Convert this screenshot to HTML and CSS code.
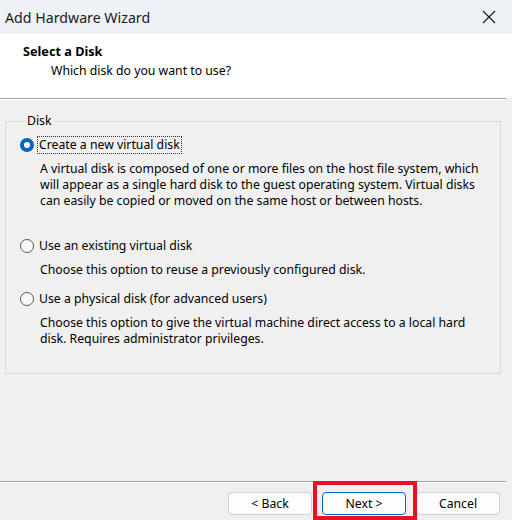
FILE: index.html
```html
<!DOCTYPE html>
<html>
<head>
<meta charset="utf-8">
<link rel="stylesheet" href="styles.css">
</head>
<body>
<div class="window">
  <div class="titlebar">
    <span class="title">Add Hardware Wizard</span>
    <svg class="close" width="14" height="14" viewBox="0 0 14 14"><path d="M1 1L13 13M13 1L1 13" stroke="#1a1a1a" stroke-width="1.2" fill="none"/></svg>
  </div>
  <div class="header">
    <div class="h-title">Select a Disk</div>
    <div class="h-sub">Which disk do you want to use?</div>
  </div>
  <div class="sep"></div>
  <div class="body">
    <fieldset class="group">
      <legend>Disk</legend>
      <div class="option">
        <span class="radio checked"></span>
        <span class="label focus">Create a new virtual disk</span>
      </div>
      <p class="desc d1">A virtual disk is composed of one or more files on the host file system, which will appear as a single hard disk to the guest operating system. Virtual disks can easily be copied or moved on the same host or between hosts.</p>
      <div class="option">
        <span class="radio"></span>
        <span class="label">Use an existing virtual disk</span>
      </div>
      <p class="desc d2">Choose this option to reuse a previously configured disk.</p>
      <div class="option">
        <span class="radio"></span>
        <span class="label">Use a physical disk (for advanced users)</span>
      </div>
      <p class="desc d3">Choose this option to give the virtual machine direct access to a local hard disk. Requires administrator privileges.</p>
    </fieldset>
  </div>
  <div class="sep bottom-sep"></div>
  <div class="buttons">
    <button class="btn">&lt; Back</button>
    <button class="btn primary">Next &gt;</button>
    <button class="btn">Cancel</button>
    <div class="highlight"></div>
  </div>
</div>
</body>
</html>
```
FILE: styles.css
```css
html, body {
  margin: 0;
  padding: 0;
}
body {
  width: 512px;
  height: 520px;
  overflow: hidden;
  background: #f0f0f0;
  font-family: "Noto Sans", "Open Sans", sans-serif;
  font-size: 12.25px;
  color: #000;
}
.window {
  display: flex;
  flex-direction: column;
  height: 520px;
  position: relative;
}
.titlebar {
  height: 34px;
  background: #eef2f6;
  display: flex;
  align-items: center;
  justify-content: space-between;
  padding: 0 16px 0 5px;
  box-sizing: border-box;
}
.title {
  font-size: 14.2px;
  color: #1a1a1a;
}
.close {
  display: block;
}
.header {
  background: #fff;
  height: 64px;
  box-sizing: border-box;
  padding: 7px 0 0 23px;
}
.h-title {
  font-weight: bold;
  font-size: 12.7px;
  line-height: 20px;
}
.h-sub {
  padding-left: 28px;
  line-height: 20px;
}
.sep {
  height: 1px;
  background: #a0a0a0;
  border-bottom: 1px solid #ffffff;
  margin-right: 6px;
}
.body {
  flex: 1;
  padding: 13px 11px 0 5px;
}
.group {
  margin: 0;
  border: 1px solid #d9d9d9;
  padding: 6px 8px 16px 14px;
  height: 261px;
  box-sizing: border-box;
}
.group legend {
  padding: 0 2px;
  margin-left: 5px;
  line-height: 16px;
}
.option {
  display: flex;
  align-items: center;
  height: 20px;
}
.radio {
  width: 14px;
  height: 14px;
  border-radius: 50%;
  border: 1px solid #5a5a5a;
  box-sizing: border-box;
  margin-right: 3px;
  background: #f7f7f7;
}
.radio.checked {
  border: 4px solid #0067c0;
  background: #fff;
}
.label {
  padding: 0 1px;
  line-height: 16px;
  border: 1px dotted transparent;
}
.label.focus {
  border-color: #333;
}
.desc {
  margin: 6px 0 0 20px;
  line-height: 16px;
}
.d1 {
  margin-bottom: 27px;
}
.d2 {
  margin-bottom: 11px;
}
.buttons {
  height: 37px;
  display: flex;
  align-items: flex-start;
  justify-content: flex-end;
  gap: 10px;
  padding: 9px 12px 0 0;
  box-sizing: border-box;
  position: relative;
}
.btn {
  width: 84px;
  height: 23px;
  font-family: inherit;
  font-size: 12.25px;
  background: #fdfdfd;
  border: 1px solid #d0d0d0;
  border-radius: 4px;
  color: #000;
  padding: 0;
}
.btn.primary {
  border-color: #0067c0;
}
.highlight {
  position: absolute;
  left: 313px;
  top: -2px;
  width: 104px;
  height: 39px;
  border: 4px solid #e81123;
  box-sizing: border-box;
}
```
